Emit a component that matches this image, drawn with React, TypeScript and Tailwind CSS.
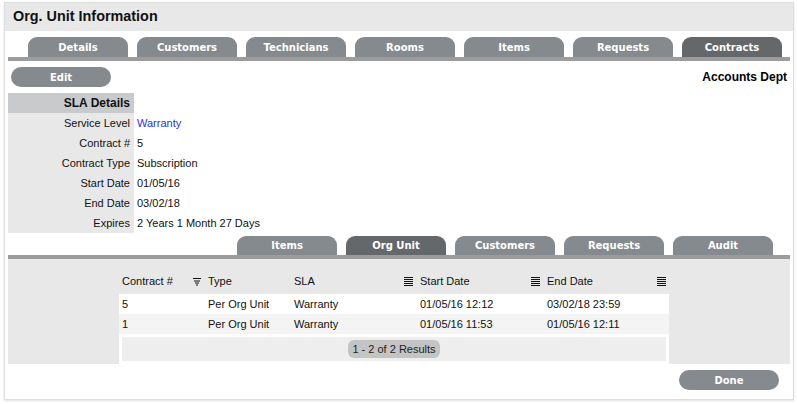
const topTabs = ["Details", "Customers", "Technicians", "Rooms", "Items", "Requests", "Contracts"];
const subTabs = ["Items", "Org Unit", "Customers", "Requests", "Audit"];

const slaRows: [string, string][] = [
  ["Service Level", "Warranty"],
  ["Contract #", "5"],
  ["Contract Type", "Subscription"],
  ["Start Date", "01/05/16"],
  ["End Date", "03/02/18"],
  ["Expires", "2 Years 1 Month 27 Days"],
];

const contracts = [
  { id: "5", type: "Per Org Unit", sla: "Warranty", start: "01/05/16 12:12", end: "03/02/18 23:59" },
  { id: "1", type: "Per Org Unit", sla: "Warranty", start: "01/05/16 11:53", end: "01/05/16 12:11" },
];

function MenuIcon() {
  return (
    <svg width="9" height="9" viewBox="0 0 9 9" className="shrink-0">
      {[0.5, 2.5, 4.5, 6.5, 8.5].map((y) => (
        <line key={y} x1="0" x2="9" y1={y} y2={y} stroke="#111" strokeWidth="1" />
      ))}
    </svg>
  );
}

function FilterIcon() {
  return (
    <svg width="8" height="8" viewBox="0 0 8 8" className="shrink-0">
      <line x1="0" x2="8" y1="0.5" y2="0.5" stroke="#111" strokeWidth="1" />
      <line x1="1" x2="7" y1="3" y2="3" stroke="#111" strokeWidth="1" />
      <line x1="2" x2="6" y1="5" y2="5" stroke="#111" strokeWidth="1" />
      <line x1="3" x2="5" y1="7" y2="7" stroke="#111" strokeWidth="1" />
    </svg>
  );
}

function Tab({ label, active, h }: { label: string; active: boolean; h: string }) {
  return (
    <div
      className={`${h} w-[100px] rounded-t-[9px] flex items-center justify-center text-white font-bold text-[10px] ${
        active ? "bg-[#64686b]" : "bg-[#858a8e]"
      }`}
      style={{ fontFamily: '"DejaVu Sans", Verdana, sans-serif' }}
    >
      {label}
    </div>
  );
}

function Pill({ label }: { label: string }) {
  return (
    <button
      className="h-[20px] w-[100px] rounded-full bg-[#858a8e] text-white font-bold text-[10px] flex items-center justify-center"
      style={{ fontFamily: '"DejaVu Sans", Verdana, sans-serif' }}
    >
      {label}
    </button>
  );
}

export default function App() {
  return (
    <div className="min-h-screen bg-white pt-[2px] pl-[4px] pr-[3px] text-[11px] text-[#111]" style={{ fontFamily: '"Liberation Sans", Arial, sans-serif' }}>
      <div className="border border-[#dddddd] shadow-[0_1px_2px_rgba(0,0,0,0.12)] bg-white">
        <div className="h-[28px] bg-[#e8e8e8] px-[8px] flex items-center font-bold text-[14.4px] text-[#111]">
          Org. Unit Information
        </div>

        <div className="px-[3px] pb-[9px]">
          {/* main tabs */}
          <div className="mt-[6px] flex gap-[9px] pl-[20px]">
            {topTabs.map((t) => (
              <Tab key={t} label={t} active={t === "Contracts"} h="h-[20px]" />
            ))}
          </div>
          <div className="h-[4px] bg-[#9c9c9c]" />

          <div className="mt-[6px] flex items-center justify-between px-[3px]">
            <Pill label="Edit" />
            <span className="font-bold text-[12px] text-black">Accounts Dept</span>
          </div>

          {/* SLA details */}
          <div className="mt-[6px]">
            <div className="flex h-[20px]">
              <div className="w-[126px] bg-[#c9cacc] flex items-center justify-end pr-[4px] font-bold text-[12px]">
                SLA Details
              </div>
            </div>
            {slaRows.map(([label, value]) => (
              <div key={label} className="flex h-[20px]">
                <div className="w-[126px] bg-[#e8e8e8] flex items-center justify-end pr-[4px]">{label}</div>
                <div className={`flex items-center pl-[3px] ${label === "Service Level" ? "text-[#3030d8]" : ""}`}>
                  {value}
                </div>
              </div>
            ))}
          </div>

          {/* sub tabs */}
          <div className="mt-[3px] flex gap-[9px] pl-[229px]">
            {subTabs.map((t) => (
              <Tab key={t} label={t} active={t === "Org Unit"} h="h-[19px]" />
            ))}
          </div>
          <div className="h-[4px] bg-[#9c9c9c]" />

          <div className="bg-[#e8e8e8] pl-[111px]">
            <div className="w-[550px]">
              <div className="h-[35px] pt-[10px] flex">
                <div className="w-[86px] flex items-center justify-between pl-[3px] pr-[4px]">
                  <span>Contract #</span>
                  <FilterIcon />
                </div>
                <div className="w-[86px] flex items-center pl-[3px]">Type</div>
                <div className="w-[126px] flex items-center justify-between pl-[3px] pr-[4px]">
                  <span>SLA</span>
                  <MenuIcon />
                </div>
                <div className="w-[127px] flex items-center justify-between pl-[3px] pr-[4px]">
                  <span>Start Date</span>
                  <MenuIcon />
                </div>
                <div className="w-[125px] flex items-center justify-between pl-[3px] pr-[3px]">
                  <span>End Date</span>
                  <MenuIcon />
                </div>
              </div>

              <div className="bg-white pb-[3px]">
                {contracts.map((c, i) => (
                  <div key={c.id} className={`flex h-[20px] items-center ${i % 2 ? "bg-[#f4f4f4]" : "bg-white"}`}>
                    <div className="w-[86px] pl-[3px]">{c.id}</div>
                    <div className="w-[86px] pl-[3px]">{c.type}</div>
                    <div className="w-[126px] pl-[3px]">{c.sla}</div>
                    <div className="w-[127px] pl-[3px]">{c.start}</div>
                    <div className="w-[125px] pl-[3px]">{c.end}</div>
                  </div>
                ))}
                <div className="mt-[3px] mx-[3px] h-[24px] bg-[#eeeeee] flex items-center justify-center">
                  <span className="h-[18px] px-[4px] rounded-[6px] bg-[#c4c4c4] flex items-center text-[#222]">
                    1 - 2 of 2 Results
                  </span>
                </div>
              </div>
            </div>
          </div>

          <div className="mt-[6px] flex justify-end pr-[11px]">
            <Pill label="Done" />
          </div>
        </div>
      </div>
    </div>
  );
}
